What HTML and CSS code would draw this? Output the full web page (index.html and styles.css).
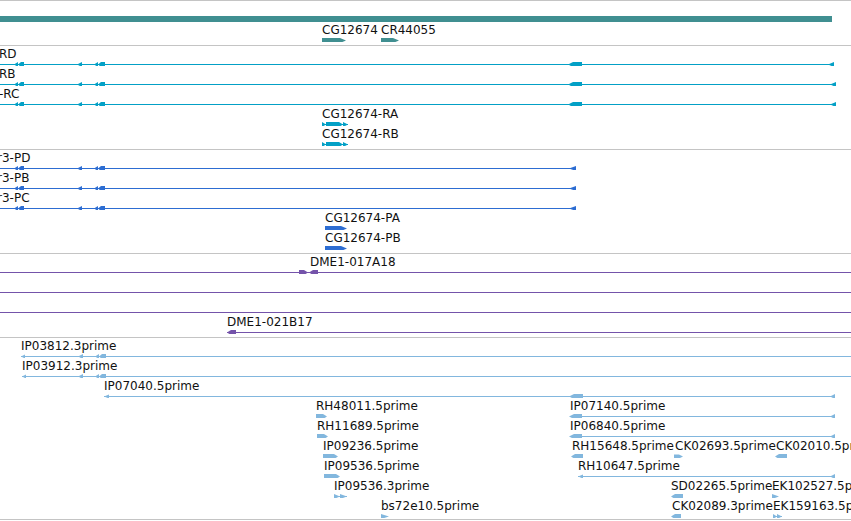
FILE: index.html
```html
<!DOCTYPE html>
<html lang="en">
<head>
    <meta charset="UTF-8">
    <title>Track view</title>
    <link rel="stylesheet" href="styles.css">
</head>
<body>
<div class="tracks">

    <!-- gene span -->
    <section class="track">
        <div class="gene-span"></div>
        <svg class="lane teal" width="851" height="20">
            <polygon points="322,16 340,16 346,18.5 340,21 322,21"/>
            <polygon points="381,16 393,16 399,18.5 393,21 381,21"/>
            <text x="322" y="12">CG12674</text>
            <text x="381" y="12">CR44055</text>
        </svg>
    </section>

    <!-- transcripts -->
    <section class="track">
        <svg class="lane cyan" width="851" height="20">
            <rect x="0" y="18" width="833" height="1"/>
            <polygon points="14,18.5 18,16 18,21"/>
            <polygon points="18,18.5 21,16 24,16 24,21 21,21"/>
            <polygon points="77,18.5 82,16 82,21"/>
            <polygon points="94,18.5 98,16 98,21"/>
            <polygon points="98,18.5 101,16 105,16 105,21 101,21"/>
            <polygon points="568,18.5 573,16 582,16 582,21 573,21"/>
            <polygon points="828,18.5 834,16 834,21"/>
            <text x="-1" y="12">RD</text>
        </svg>
        <svg class="lane cyan" width="851" height="20">
            <rect x="0" y="18" width="835" height="1"/>
            <polygon points="14,18.5 18,16 18,21"/>
            <polygon points="18,18.5 21,16 24,16 24,21 21,21"/>
            <polygon points="77,18.5 82,16 82,21"/>
            <polygon points="94,18.5 98,16 98,21"/>
            <polygon points="98,18.5 101,16 105,16 105,21 101,21"/>
            <polygon points="568,18.5 573,16 582,16 582,21 573,21"/>
            <polygon points="830,18.5 836,16 836,21"/>
            <text x="-1" y="12">RB</text>
        </svg>
        <svg class="lane cyan" width="851" height="20">
            <rect x="0" y="18" width="835" height="1"/>
            <polygon points="14,18.5 18,16 18,21"/>
            <polygon points="18,18.5 21,16 24,16 24,21 21,21"/>
            <polygon points="77,18.5 82,16 82,21"/>
            <polygon points="94,18.5 98,16 98,21"/>
            <polygon points="98,18.5 101,16 105,16 105,21 101,21"/>
            <polygon points="568,18.5 573,16 582,16 582,21 573,21"/>
            <polygon points="830,18.5 836,16 836,21"/>
            <text x="-1" y="12">-RC</text>
        </svg>
        <svg class="lane cyan" width="851" height="20">
            <rect x="322" y="18" width="26" height="1"/>
            <polygon points="322,16 326,18.5 322,21"/>
            <polygon points="326,16 339,16 343,18.5 339,21 326,21"/>
            <polygon points="343,16 348,18.5 343,21"/>
            <text x="322" y="12">CG12674-RA</text>
        </svg>
        <svg class="lane cyan" width="851" height="20">
            <rect x="322" y="18" width="26" height="1"/>
            <polygon points="322,16 326,18.5 322,21"/>
            <polygon points="326,16 339,16 343,18.5 339,21 326,21"/>
            <polygon points="343,16 348,18.5 343,21"/>
            <text x="322" y="12">CG12674-RB</text>
        </svg>
    </section>

    <!-- proteins -->
    <section class="track">
        <svg class="lane blue" width="851" height="20">
            <rect x="0" y="18" width="576" height="1"/>
            <polygon points="14,18.5 18,16 18,21"/>
            <polygon points="18,18.5 21,16 24,16 24,21 21,21"/>
            <polygon points="77,18.5 82,16 82,21"/>
            <polygon points="94,18.5 98,16 98,21"/>
            <polygon points="98,18.5 101,16 105,16 105,21 101,21"/>
            <polygon points="569,18.5 576,16 576,21"/>
            <text x="-3" y="12">r3-PD</text>
        </svg>
        <svg class="lane blue" width="851" height="20">
            <rect x="0" y="18" width="576" height="1"/>
            <polygon points="14,18.5 18,16 18,21"/>
            <polygon points="18,18.5 21,16 24,16 24,21 21,21"/>
            <polygon points="77,18.5 82,16 82,21"/>
            <polygon points="94,18.5 98,16 98,21"/>
            <polygon points="98,18.5 101,16 105,16 105,21 101,21"/>
            <polygon points="569,18.5 576,16 576,21"/>
            <text x="-3" y="12">r3-PB</text>
        </svg>
        <svg class="lane blue" width="851" height="20">
            <rect x="0" y="18" width="576" height="1"/>
            <polygon points="14,18.5 18,16 18,21"/>
            <polygon points="18,18.5 21,16 24,16 24,21 21,21"/>
            <polygon points="77,18.5 82,16 82,21"/>
            <polygon points="94,18.5 98,16 98,21"/>
            <polygon points="98,18.5 101,16 105,16 105,21 101,21"/>
            <polygon points="569,18.5 576,16 576,21"/>
            <text x="-3" y="12">r3-PC</text>
        </svg>
        <svg class="lane blue" width="851" height="20">
            <polygon points="325,16 341,16 347,18.5 341,21 325,21"/>
            <text x="325" y="12">CG12674-PA</text>
        </svg>
        <svg class="lane blue" width="851" height="20">
            <polygon points="325,16 341,16 347,18.5 341,21 325,21"/>
            <text x="325" y="12">CG12674-PB</text>
        </svg>
    </section>

    <!-- clones -->
    <section class="track">
        <svg class="lane purple" width="851" height="20">
            <rect x="0" y="18" width="851" height="1"/>
            <polygon points="299,16 304,16 308,18.5 304,21 299,21"/>
            <polygon points="309,18.5 313,16 318,16 318,21 313,21"/>
            <text x="310" y="12">DME1-017A18</text>
        </svg>
        <svg class="lane purple" width="851" height="20">
            <rect x="0" y="18" width="851" height="1"/>
        </svg>
        <svg class="lane purple" width="851" height="20">
            <rect x="0" y="18" width="851" height="1"/>
        </svg>
        <svg class="lane purple" width="851" height="20">
            <rect x="227" y="18" width="624" height="1"/>
            <polygon points="227,18.5 231,16 236,16 236,21 231,21"/>
            <text x="227" y="12">DME1-021B17</text>
        </svg>
    </section>

    <!-- ests -->
    <section class="track last">
        <svg class="lane light" width="851" height="20">
            <rect x="21" y="18" width="830" height="1"/>
            <polygon points="21,18.5 25,16.5 25,20.5"/>
            <polygon points="78,18.5 83,16 83,21"/>
            <polygon points="95,18.5 99,16 99,21"/>
            <polygon points="99,18.5 102,16 106,16 106,21 102,21"/>
            <text x="21" y="12">IP03812.3prime</text>
        </svg>
        <svg class="lane light" width="851" height="20">
            <rect x="22" y="18" width="829" height="1"/>
            <polygon points="22,18.5 26,16.5 26,20.5"/>
            <polygon points="78,18.5 83,16 83,21"/>
            <polygon points="95,18.5 99,16 99,21"/>
            <polygon points="99,18.5 102,16 106,16 106,21 102,21"/>
            <text x="22" y="12">IP03912.3prime</text>
        </svg>
        <svg class="lane light" width="851" height="20">
            <rect x="104" y="18" width="731" height="1"/>
            <polygon points="104,18.5 109,16.5 109,20.5"/>
            <polygon points="569,18.5 574,16 583,16 583,21 574,21"/>
            <polygon points="830,18.5 835,16 835,21"/>
            <text x="104" y="12">IP07040.5prime</text>
        </svg>
        <svg class="lane light" width="851" height="20">
            <polygon points="316,16 323,16 327,18.5 323,21 316,21"/>
            <rect x="570" y="18" width="265" height="1"/>
            <polygon points="569,18.5 574,16 582,16 582,21 574,21"/>
            <polygon points="830,18.5 835,16 835,21"/>
            <text x="316" y="12">RH48011.5prime</text>
            <text x="570" y="12">IP07140.5prime</text>
        </svg>
        <svg class="lane light" width="851" height="20">
            <polygon points="317,16 324,16 328,18.5 324,21 317,21"/>
            <rect x="570" y="18" width="265" height="1"/>
            <polygon points="569,18.5 574,16 582,16 582,21 574,21"/>
            <polygon points="830,18.5 835,16 835,21"/>
            <text x="317" y="12">RH11689.5prime</text>
            <text x="570" y="12">IP06840.5prime</text>
        </svg>
        <svg class="lane light" width="851" height="20">
            <polygon points="323,16 334,16 338,18.5 334,21 323,21"/>
            <polygon points="571,18.5 575,16 583,16 583,21 575,21"/>
            <polygon points="674,16.5 679,16.5 683,18.5 679,20.5 674,20.5"/>
            <polygon points="775,18.5 779,16 787,16 787,21 779,21"/>
            <text x="323" y="12">IP09236.5prime</text>
            <text x="572" y="12">RH15648.5prime</text>
            <text x="675" y="12">CK02693.5prime</text>
            <text x="776" y="12">CK02010.5prime</text>
        </svg>
        <svg class="lane light" width="851" height="20">
            <polygon points="324,16 336,16 340,18.5 336,21 324,21"/>
            <rect x="578" y="18" width="257" height="1"/>
            <polygon points="578,18.5 583,16.5 583,20.5"/>
            <polygon points="830,18.5 835,16 835,21"/>
            <text x="324" y="12">IP09536.5prime</text>
            <text x="578" y="12">RH10647.5prime</text>
        </svg>
        <svg class="lane light" width="851" height="20">
            <rect x="334" y="18" width="13" height="1"/>
            <polygon points="334,16 340,18.5 334,21"/>
            <polygon points="340,16 347,18.5 340,21"/>
            <polygon points="671,18.5 675,16 683,16 683,21 675,21"/>
            <polygon points="772,16 779,18.5 772,21"/>
            <text x="334" y="12">IP09536.3prime</text>
            <text x="671" y="12">SD02265.5prime</text>
            <text x="772" y="12">EK102527.5prime</text>
        </svg>
        <svg class="lane light" width="851" height="20">
            <polygon points="381,16 389,18.5 381,21"/>
            <polygon points="671,18.5 675,16 681,16 681,21 675,21"/>
            <rect x="773" y="18" width="9" height="1"/>
            <polygon points="773,16 777,18.5 773,21"/>
            <polygon points="777,16 782,18.5 777,21"/>
            <text x="381" y="12">bs72e10.5prime</text>
            <text x="672" y="12">CK02089.3prime</text>
            <text x="773" y="12">EK159163.5prime</text>
        </svg>
    </section>

    <section class="track"></section>
</div>
</body>
</html>
```

FILE: styles.css
```css
/* track colours */
:root {
    --rule: #c4c4c4;
    --teal: #408f91;
    --cyan: #03a0c6;
    --blue: #2d6dd2;
    --purple: #7453aa;
    --light: #82b7de;
}

* {
    margin: 0;
    padding: 0;
    box-sizing: border-box;
}

body {
    background: #fff;
    overflow: hidden;
    font-family: 'DejaVu Sans', Verdana, sans-serif;
}

.tracks {
    width: 851px;
}

.track {
    border-top: 1px solid var(--rule);
    padding-bottom: 3px;
}

.track.last {
    padding-bottom: 1px;
}

.gene-span {
    width: 832px;
    height: 6px;
    margin-top: 15px;
    background: var(--teal);
}

.lane {
    display: block;
    overflow: hidden;
}

.lane rect {
    shape-rendering: crispEdges;
}

.lane text {
    font-family: 'DejaVu Sans', Verdana, sans-serif;
    font-size: 12px;
    fill: #111;
}

.teal { fill: var(--teal); }
.cyan { fill: var(--cyan); }
.blue { fill: var(--blue); }
.purple { fill: var(--purple); }
.light { fill: var(--light); }
```
